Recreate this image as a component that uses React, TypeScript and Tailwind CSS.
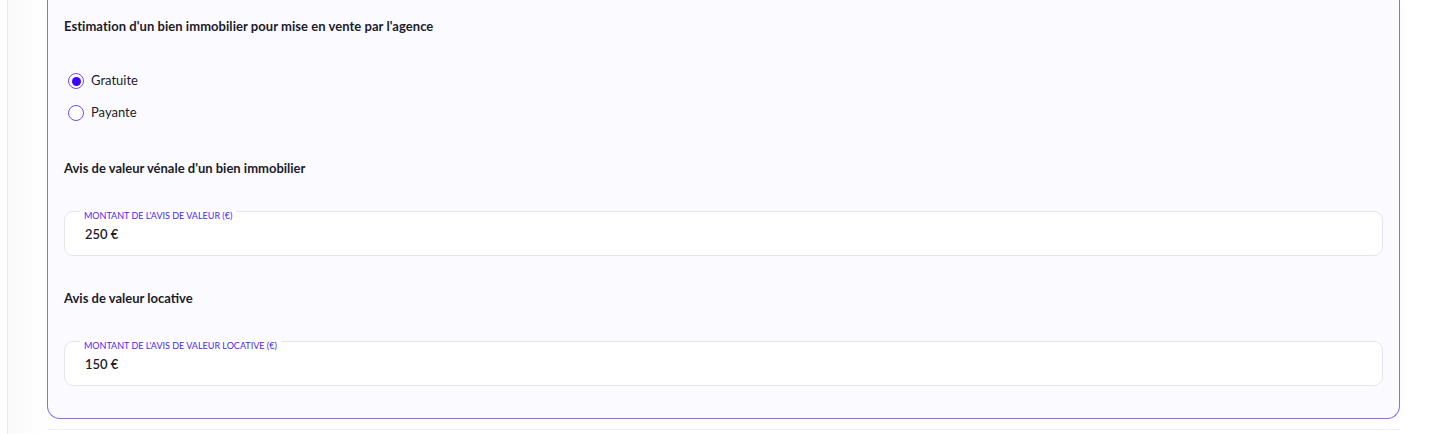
import React from "react";

function Radio({ checked, label }: { checked: boolean; label: string }) {
  return (
    <label className="flex items-center h-5 gap-[7px] pl-[4px] cursor-pointer">
      <span className="w-[16px] h-[16px] rounded-full border-[1.5px] border-[#6f4dff] bg-white flex items-center justify-center">
        {checked && <span className="w-[9px] h-[9px] rounded-full bg-[#3a06ff]" />}
      </span>
      <span className="text-[13px] text-[#1b1b2a] font-normal">{label}</span>
    </label>
  );
}

function Field({ label, value }: { label: string; value: string }) {
  return (
    <div className="relative h-[45px] rounded-[9px] border border-[#e3e6ef] bg-white">
      <span className="absolute left-[15px] top-[-2px] px-[4px] bg-white text-[9px] leading-[12px] font-normal uppercase text-[#4b1dff]">
        {label}
      </span>
      <div className="pl-[20px] pt-[14px] text-[13px] leading-[16px] font-semibold text-[#1b1b2a]">{value}</div>
    </div>
  );
}

export default function App() {
  return (
    <div
      className="w-[1431px] h-[434px] bg-white overflow-hidden pl-[7px]"
      style={{ fontFamily: "Lato, 'Noto Sans', sans-serif" }}
    >
      <div className="h-full border-l border-[#e4e9f0] bg-gradient-to-r from-[#fafafa] to-white to-[40px] pl-[39px] pr-[31px]">
        <div className="border-x border-b border-[#8b6cf0] rounded-b-[13px] bg-[#fbfbff] px-[16px] pt-[16px] pb-[32px] shadow-[0_0_12px_rgba(0,0,0,0.03)]">
          <div className="h-5 text-[13px] leading-5 font-bold text-[#1b1b2a] tracking-[0.05px]">
            Estimation d'un bien immobilier pour mise en vente par l'agence
          </div>
          <div className="mt-[35px] flex flex-col gap-[12px]">
            <Radio checked label="Gratuite" />
            <Radio checked={false} label="Payante" />
          </div>
          <div className="mt-[35px] h-5 text-[13px] leading-5 font-bold text-[#1b1b2a]">
            Avis de valeur vénale d'un bien immobilier
          </div>
          <div className="mt-[33px]">
            <Field label="Montant de l'avis de valeur (€)" value="250 €" />
          </div>
          <div className="mt-[32px] h-5 text-[13px] leading-5 font-bold text-[#1b1b2a]">
            Avis de valeur locative
          </div>
          <div className="mt-[33px]">
            <Field label="Montant de l'avis de valeur locative (€)" value="150 €" />
          </div>
        </div>
        <div className="mt-[10px] h-px bg-[#f0f0f2]" />
      </div>
    </div>
  );
}
